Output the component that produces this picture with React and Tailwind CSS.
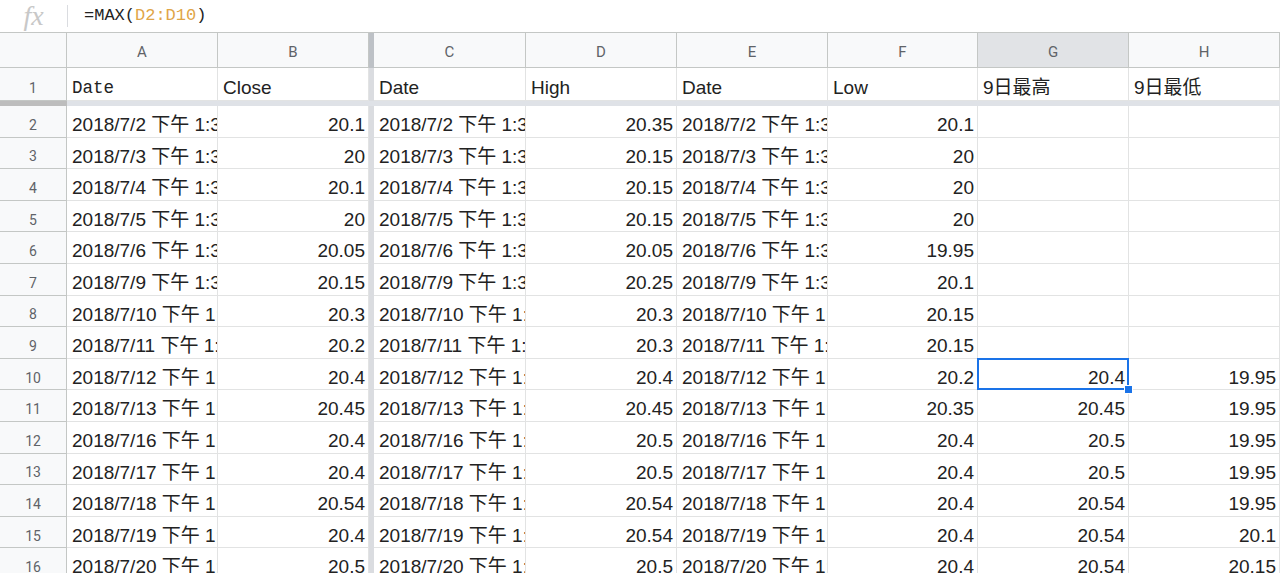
const SANS = "font-['Liberation_Sans','Noto_Sans_CJK_TC',sans-serif]";

const cols = [
  { key: "A", w: "w-[151px]" },
  { key: "B", w: "w-[151px]" },
  { key: "C", w: "w-[152px]" },
  { key: "D", w: "w-[151px]" },
  { key: "E", w: "w-[151px]" },
  { key: "F", w: "w-[150px]" },
  { key: "G", w: "w-[151px]" },
  { key: "H", w: "w-[151px]" },
];

const rows = [
  ["2018/7/2", "20.1", "20.35", "20.1", "", ""],
  ["2018/7/3", "20", "20.15", "20", "", ""],
  ["2018/7/4", "20.1", "20.15", "20", "", ""],
  ["2018/7/5", "20", "20.15", "20", "", ""],
  ["2018/7/6", "20.05", "20.05", "19.95", "", ""],
  ["2018/7/9", "20.15", "20.25", "20.1", "", ""],
  ["2018/7/10", "20.3", "20.3", "20.15", "", ""],
  ["2018/7/11", "20.2", "20.3", "20.15", "", ""],
  ["2018/7/12", "20.4", "20.4", "20.2", "20.4", "19.95"],
  ["2018/7/13", "20.45", "20.45", "20.35", "20.45", "19.95"],
  ["2018/7/16", "20.4", "20.5", "20.4", "20.5", "19.95"],
  ["2018/7/17", "20.4", "20.5", "20.4", "20.5", "19.95"],
  ["2018/7/18", "20.54", "20.54", "20.4", "20.54", "19.95"],
  ["2018/7/19", "20.4", "20.54", "20.4", "20.54", "20.1"],
  ["2018/7/20", "20.5", "20.5", "20.4", "20.54", "20.15"],
];

function Cell({ w, align = "left", children, selected, mono }) {
  return (
    <div
      className={`${w} relative shrink-0 h-full flex items-center border-r border-b border-[#e2e3e3]`}
    >
      <div
        className={`w-full mt-[8px] overflow-hidden whitespace-nowrap text-[#222] ${
          mono ? "font-['Liberation_Mono',monospace] text-[17.5px]" : `${SANS} text-[19px]`
        } ${align === "right" ? "text-right pr-[3px]" : "pl-[5px] pr-[3px]"}`}
      >
        {children}
      </div>
      {selected && (
        <div className="absolute z-10 -left-px -top-px -right-px -bottom-px border-2 border-[#1a73e8] pointer-events-none">
          <div className="absolute -right-[6px] -bottom-[6px] w-[9px] h-[9px] bg-[#1a73e8] border border-white" />
        </div>
      )}
    </div>
  );
}

function RowHead({ children }) {
  return (
    <div className="w-[67px] shrink-0 h-full flex items-center justify-center border-r border-b border-[#c4c7c5] bg-[#f8f9fa] text-[14px] text-[#5f6368] font-['Roboto',sans-serif]">
      <span className="mt-[8px]">{children}</span>
    </div>
  );
}

function VBar({ dark }) {
  return <div className={`w-[5px] shrink-0 h-full ${dark ? "bg-[#bdc1c6]" : "bg-[#dadce0]"}`} />;
}

export default function App() {
  return (
    <div className="w-[1280px] h-[573px] overflow-hidden bg-white">
      {/* formula bar */}
      <div className="h-[32px] flex items-center">
        <div className="w-[67px] h-full flex items-center justify-center text-[28px] italic text-[#c8c8c8] font-['Liberation_Serif',serif] leading-[32px]">
          fx
        </div>
        <div className="w-px h-[22px] bg-[#dadce0]" />
        <div className="pl-4 text-[17px] text-[#222] font-['Liberation_Mono',monospace]">
          =MAX(<span className="text-[#e0a547]">D2:D10</span>)
        </div>
      </div>

      {/* column headers */}
      <div className="h-[36px] flex border-t border-[#c4c7c5]">
        <div className="w-[67px] shrink-0 h-full border-r border-b border-[#c4c7c5] bg-[#f8f9fa]" />
        {cols.map((c, i) => (
          <div key={c.key} className="contents">
            <div
              className={`${c.w} shrink-0 h-full flex items-center justify-center border-r border-b border-[#c4c7c5] ${
                c.key === "G" ? "bg-[#e1e3e6]" : "bg-[#f8f9fa]"
              } text-[15px] text-[#5f6368] font-['Roboto',sans-serif]`}
            >
              <span className="mt-[4px]">{c.key}</span>
            </div>
            {i === 1 && <VBar dark />}
          </div>
        ))}
      </div>

      {/* row 1 */}
      <div className="h-[33px] flex">
        <RowHead>1</RowHead>
        <Cell w="w-[151px]" mono>Date</Cell>
        <Cell w="w-[151px]">Close</Cell>
        <VBar />
        <Cell w="w-[152px]">Date</Cell>
        <Cell w="w-[151px]">High</Cell>
        <Cell w="w-[151px]">Date</Cell>
        <Cell w="w-[150px]">Low</Cell>
        <Cell w="w-[151px]">9日最高</Cell>
        <Cell w="w-[151px]">9日最低</Cell>
      </div>

      {/* frozen row divider */}
      <div className="h-[5px] flex">
        <div className="w-[67px] shrink-0 bg-[#bdbdbd]" />
        <div className="flex-1 bg-[#dfe2e7]" />
      </div>

      {rows.map((r, i) => {
        const n = i + 2;
        const date = `${r[0]} 下午 1:30:00`;
        return (
          <div key={n} className="h-[31.6px] flex">
            <RowHead>{n}</RowHead>
            <Cell w="w-[151px]">{date}</Cell>
            <Cell w="w-[151px]" align="right">{r[1]}</Cell>
            <VBar />
            <Cell w="w-[152px]">{date}</Cell>
            <Cell w="w-[151px]" align="right">{r[2]}</Cell>
            <Cell w="w-[151px]">{date}</Cell>
            <Cell w="w-[150px]" align="right">{r[3]}</Cell>
            <Cell w="w-[151px]" align="right" selected={n === 10}>{r[4]}</Cell>
            <Cell w="w-[151px]" align="right">{r[5]}</Cell>
          </div>
        );
      })}
    </div>
  );
}
